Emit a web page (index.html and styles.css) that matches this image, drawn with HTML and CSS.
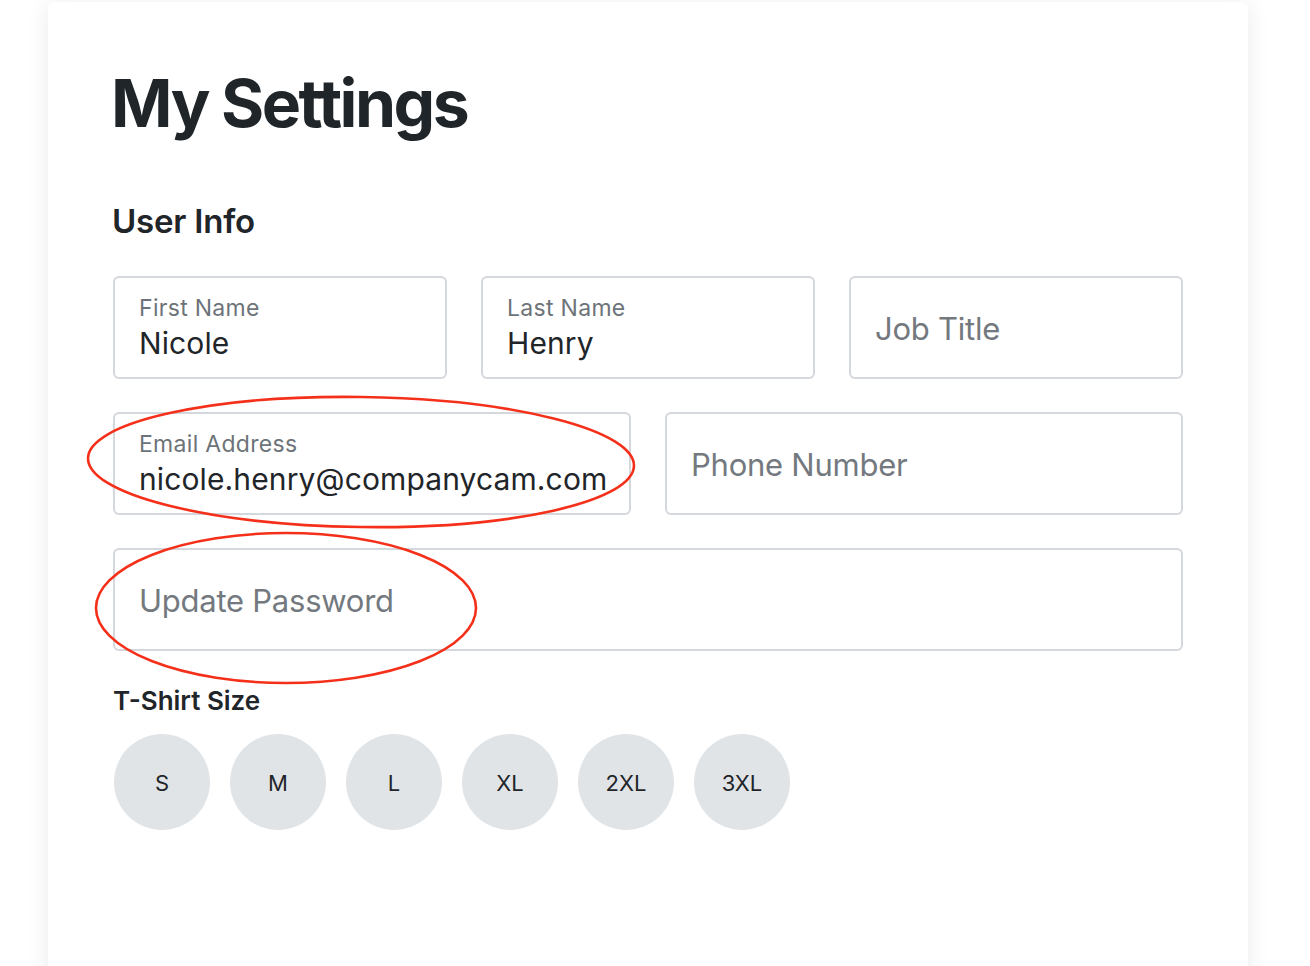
FILE: index.html
```html
<!DOCTYPE html>
<html lang="en">
<head>
<meta charset="utf-8">
<title>My Settings</title>
<link rel="stylesheet" href="styles.css">
</head>
<body>
<main class="card">
  <h1 class="title">My Settings</h1>
  <h2 class="section-title">User Info</h2>
  <div class="fields">
    <div class="row row-3">
      <div class="field">
        <span class="field-label">First Name</span>
        <span class="field-value">Nicole</span>
      </div>
      <div class="field">
        <span class="field-label">Last Name</span>
        <span class="field-value">Henry</span>
      </div>
      <div class="field field-empty">
        <span class="placeholder">Job Title</span>
      </div>
    </div>
    <div class="row row-2">
      <div class="field">
        <span class="field-label">Email Address</span>
        <span class="field-value">nicole.henry@companycam.com</span>
      </div>
      <div class="field field-empty">
        <span class="placeholder">Phone Number</span>
      </div>
    </div>
    <div class="row row-1">
      <div class="field field-empty">
        <span class="placeholder">Update Password</span>
      </div>
    </div>
  </div>
  <h3 class="sub-title">T-Shirt Size</h3>
  <div class="sizes">
    <button class="size">S</button>
    <button class="size">M</button>
    <button class="size">L</button>
    <button class="size">XL</button>
    <button class="size">2XL</button>
    <button class="size">3XL</button>
  </div>
</main>
<svg class="annotations" width="1310" height="966" viewBox="0 0 1310 966" aria-hidden="true">
  <ellipse cx="361" cy="462" rx="273" ry="65" transform="rotate(0.8 361 462)" />
  <ellipse cx="286" cy="608" rx="190" ry="75" />
</svg>
</body>
</html>
```
FILE: styles.css
```css
* { box-sizing: border-box; }

html, body {
  margin: 0;
  padding: 0;
  background: #ffffff;
  height: 966px;
  overflow: hidden;
}

body {
  font-family: "Inter", "Roboto", "Liberation Sans", sans-serif;
  color: #1f2529;
}

.card {
  width: 1200px;
  min-height: 1000px;
  margin: 2px 0 0 48px;
  padding: 61px 65px 0 65px;
  background: #ffffff;
  border-radius: 8px;
  box-shadow: 0 2px 22px rgba(30, 40, 50, 0.09);
}

.title {
  margin: 0 0 0 -2px;
  font-size: 66px;
  line-height: 80px;
  font-weight: 700;
  letter-spacing: -2.5px;
  color: #1f2529;
}

.section-title {
  margin: 58px 0 0 -1px;
  font-size: 33px;
  line-height: 40px;
  font-weight: 600;
  letter-spacing: -0.2px;
  color: #1f2529;
}

.fields {
  margin-top: 35px;
  display: flex;
  flex-direction: column;
  gap: 33px;
}

.row {
  display: grid;
  gap: 34px;
}
.row-3 { grid-template-columns: repeat(3, minmax(0, 1fr)); }
.row-2 { grid-template-columns: repeat(2, minmax(0, 1fr)); }
.row-1 { grid-template-columns: minmax(0, 1fr); }

.field {
  height: 103px;
  min-width: 0;
  border: 2px solid #d4d8dc;
  border-radius: 6px;
  padding: 17px 24px 0 24px;
  display: flex;
  flex-direction: column;
  background: #fff;
}

.field-label {
  font-size: 23px;
  line-height: 26px;
  letter-spacing: 0.3px;
  color: #6d7378;
}

.field-value {
  margin-top: 4px;
  font-size: 30px;
  line-height: 36px;
  color: #1f2529;
  letter-spacing: 0.12px;
  white-space: nowrap;
}

.field-empty {
  padding-top: 2px;
  justify-content: center;
}

.placeholder {
  font-size: 31px;
  line-height: 38px;
  color: #73797e;
  letter-spacing: -0.25px;
}

.sub-title {
  margin: 35px 0 0 0;
  font-size: 26px;
  line-height: 30px;
  font-weight: 600;
  letter-spacing: 0;
  color: #1f2529;
}

.sizes {
  margin-top: 18px;
  display: flex;
  gap: 20px;
  padding-left: 1px;
}

.size {
  width: 96px;
  height: 96px;
  border-radius: 50%;
  border: none;
  background: #e1e4e7;
  font-family: inherit;
  font-size: 22px;
  color: #1f2529;
  display: flex;
  align-items: center;
  justify-content: center;
  padding: 2px 0 0 0;
}

.annotations {
  position: absolute;
  left: 0;
  top: 0;
  pointer-events: none;
}

.annotations ellipse {
  fill: none;
  stroke: #f5301a;
  stroke-width: 2.6;
}
```
